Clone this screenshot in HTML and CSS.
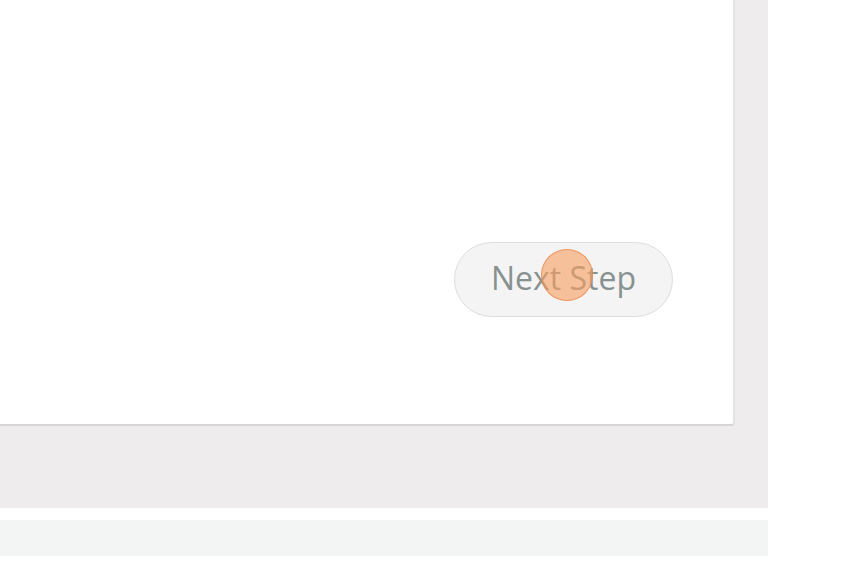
FILE: index.html
```html
<!DOCTYPE html>
<html>
<head>
<meta charset="utf-8">
<link rel="stylesheet" href="styles.css">
</head>
<body>
<div class="stage">
  <div class="card">
    <div class="actions">
      <button class="next-btn">Next Step<span class="click-dot"></span></button>
    </div>
  </div>
</div>
<div class="bar"></div>
</body>
</html>
```
FILE: styles.css
```css
html, body {
  margin: 0;
  padding: 0;
  background: #ffffff;
  font-family: "Open Sans", "Liberation Sans", sans-serif;
}
.stage {
  width: 733px;
  height: 425px;
  padding: 0 35px 83px 0;
  background: #eeeced;
}
.card {
  box-sizing: border-box;
  width: 735px;
  height: 426px;
  background: #ffffff;
  border-right: 2px solid #e4e3e3;
  border-bottom: 2px solid #d6d6d6;
  border-bottom-right-radius: 4px;
  display: flex;
  flex-direction: column;
}
.actions {
  display: flex;
  justify-content: flex-end;
  padding: 242px 60px 0 0;
}
.next-btn {
  position: relative;
  box-sizing: border-box;
  width: 219px;
  height: 75px;
  border-radius: 38px;
  border: 1px solid #dddddd;
  background: #f4f4f4;
  color: #86928f;
  font-family: "Open Sans", "Liberation Sans", sans-serif;
  font-size: 32px;
  font-weight: 400;
  padding: 0 0 4px 0;
  line-height: 1;
}
.click-dot {
  position: absolute;
  left: 86px;
  top: 6px;
  width: 52px;
  height: 52px;
  border-radius: 50%;
  background: rgba(247, 160, 98, 0.62);
  border: 1px solid rgba(236, 140, 75, 0.85);
  box-sizing: border-box;
}
.bar {
  width: 768px;
  height: 36px;
  margin-top: 12px;
  background: #f3f4f4;
}
```
